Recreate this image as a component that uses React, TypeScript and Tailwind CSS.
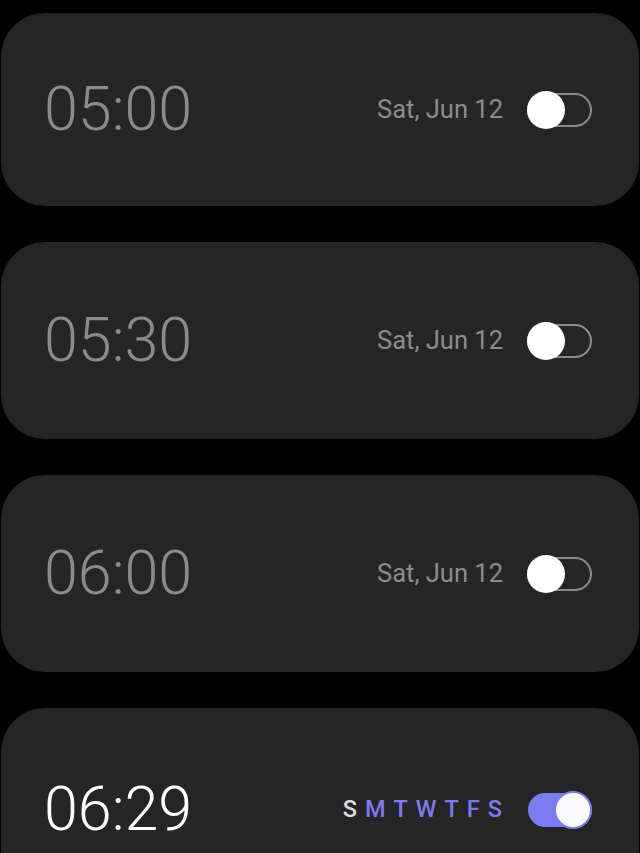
import React from "react";

type Alarm = { time: string; date?: string; on: boolean; h: string };

const alarms: Alarm[] = [
  { time: "05:00", date: "Sat, Jun 12", on: false, h: "h-[193px]" },
  { time: "05:30", date: "Sat, Jun 12", on: false, h: "h-[197px]" },
  { time: "06:00", date: "Sat, Jun 12", on: false, h: "h-[197px]" },
  { time: "06:29", on: true, h: "h-[203px]" },
];

function Toggle({ on }: { on: boolean }) {
  if (on) {
    return (
      <div className="relative w-[64px] h-[34px] rounded-full bg-[#7c7cf2]">
        <div className="absolute right-0 top-1/2 -translate-y-1/2 w-[38px] h-[38px] rounded-full bg-[#fbfbff] border-2 border-[#7c7cf2]" />
      </div>
    );
  }
  return (
    <div className="relative w-[65px] h-[34px] rounded-full border-2 border-[#8a8a8a]">
      <div className="absolute -left-[2px] top-1/2 -translate-y-1/2 w-[38px] h-[38px] rounded-full bg-white" />
    </div>
  );
}

const days = ["S", "M", "T", "W", "T", "F", "S"];

export default function App() {
  return (
    <div
      className="h-[853px] w-[640px] overflow-hidden bg-black pt-[13px] flex flex-col gap-[36px]"
      style={{ fontFamily: "Roboto, 'Liberation Sans', sans-serif" }}
    >
      {alarms.map((a, i) => (
        <div
          key={i}
          className={`${a.h} shrink-0 mx-[1px] rounded-[44px] bg-[#252525] flex items-center justify-between pl-[43px] pr-[47px]`}
        >
          <span
            className={`text-[61px] font-light leading-none ${
              a.on ? "text-white" : "text-[#8b8b8b]"
            }`}
          >
            {a.time}
          </span>
          <div className="flex items-center gap-[24px]">
            {a.date ? (
              <span className="text-[25.5px] text-[#8c8c8c] leading-none">{a.date}</span>
            ) : (
              <div className="flex items-center gap-[8px] text-[23.5px] font-medium leading-none mr-[2px]">
                {days.map((d, j) => (
                  <span key={j} className={j === 0 ? "text-[#dcdcdc]" : "text-[#7d7af0]"}>
                    {d}
                  </span>
                ))}
              </div>
            )}
            <Toggle on={a.on} />
          </div>
        </div>
      ))}
    </div>
  );
}
